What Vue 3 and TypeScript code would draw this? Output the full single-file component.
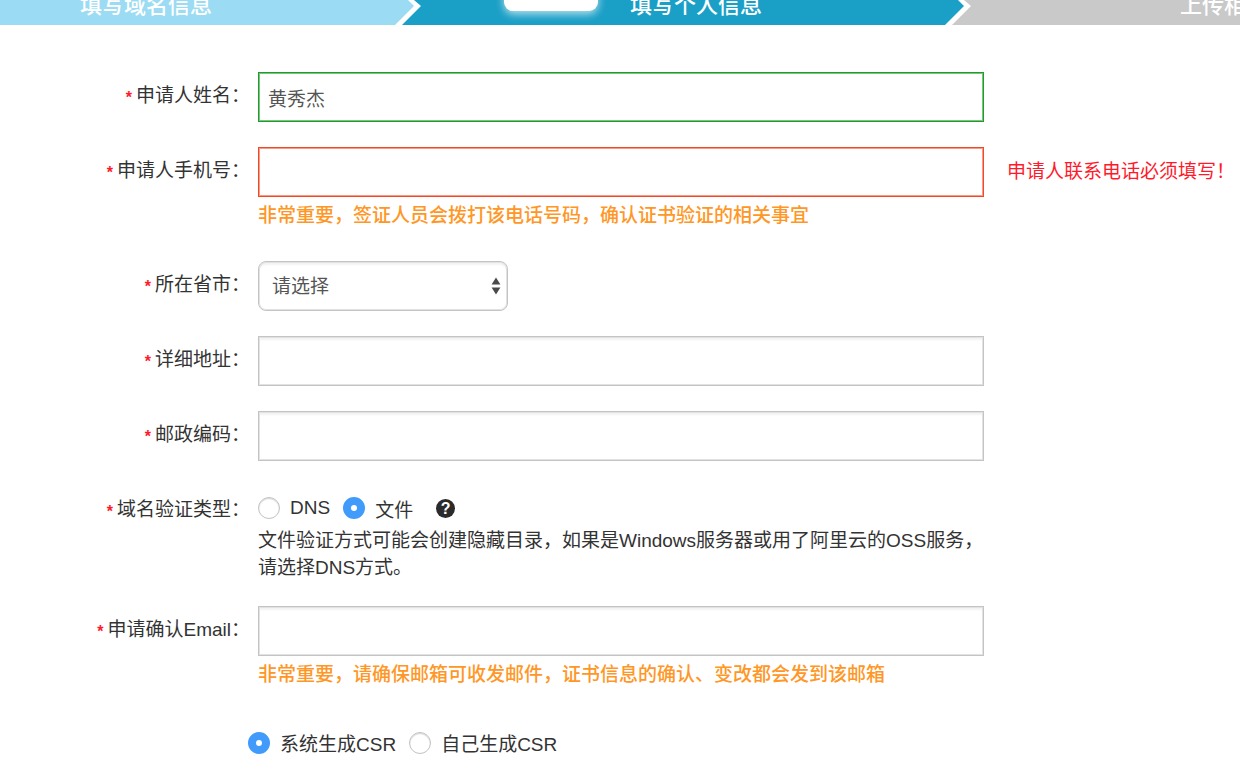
<script setup lang="ts">
import { ref } from 'vue'

const steps = ['填写域名信息', '填写个人信息', '上传相关信息']

const name = ref('黄秀杰')
const phone = ref('')
const province = ref('')
const address = ref('')
const postcode = ref('')
const email = ref('')
const verifyType = ref<'dns' | 'file'>('file')
const csrMode = ref<'system' | 'self'>('system')
</script>

<template>
  <div class="page">
    <ol class="steps">
      <li v-for="(step, i) in steps" :key="step" class="step" :class="'step-' + (i + 1)">
        <span class="step-text">{{ step }}</span>
        <span v-if="i === 1" class="badge"></span>
      </li>
    </ol>

    <form class="form" @submit.prevent>
      <div class="row">
        <label class="label" for="name"><span class="star">*</span>申请人姓名：</label>
        <div class="field">
          <input id="name" v-model="name" class="input valid" type="text" />
        </div>
      </div>

      <div class="row">
        <label class="label" for="phone"><span class="star">*</span>申请人手机号：</label>
        <div class="field">
          <input id="phone" v-model="phone" class="input invalid" type="tel" />
          <p class="hint">非常重要，签证人员会拨打该电话号码，确认证书验证的相关事宜</p>
        </div>
        <p class="error">申请人联系电话必须填写！</p>
      </div>

      <div class="row">
        <label class="label" for="province"><span class="star">*</span>所在省市：</label>
        <div class="field">
          <div class="select-wrap">
            <select id="province" v-model="province" class="select">
              <option value="">请选择</option>
            </select>
            <svg class="arrows" viewBox="0 0 10 18" width="10" height="18" aria-hidden="true">
              <path d="M5 0.5L9.4 7.5H0.6ZM5 17.5L9.4 10.5H0.6Z" fill="#4a4a4a" />
            </svg>
          </div>
        </div>
      </div>

      <div class="row">
        <label class="label" for="address"><span class="star">*</span>详细地址：</label>
        <div class="field">
          <input id="address" v-model="address" class="input" type="text" />
        </div>
      </div>

      <div class="row">
        <label class="label" for="postcode"><span class="star">*</span>邮政编码：</label>
        <div class="field">
          <input id="postcode" v-model="postcode" class="input" type="text" />
        </div>
      </div>

      <div class="row" role="radiogroup" aria-labelledby="verify-label">
        <span id="verify-label" class="label"><span class="star">*</span>域名验证类型：</span>
        <div class="field">
          <div class="radios">
            <label class="option"><input v-model="verifyType" class="radio" type="radio" name="verify" value="dns" />DNS</label>
            <label class="option"><input v-model="verifyType" class="radio" type="radio" name="verify" value="file" />文件</label>
            <button class="help" type="button">?</button>
          </div>
          <p class="note">文件验证方式可能会创建隐藏目录，如果是Windows服务器或用了阿里云的OSS服务，<br />请选择DNS方式。</p>
        </div>
      </div>

      <div class="row">
        <label class="label" for="email"><span class="star">*</span>申请确认Email：</label>
        <div class="field">
          <input id="email" v-model="email" class="input" type="email" />
          <p class="hint">非常重要，请确保邮箱可收发邮件，证书信息的确认、变改都会发到该邮箱</p>
        </div>
      </div>

      <div class="csr">
        <label class="option"><input v-model="csrMode" class="radio" type="radio" name="csr" value="system" />系统生成CSR</label>
        <label class="option"><input v-model="csrMode" class="radio" type="radio" name="csr" value="self" />自己生成CSR</label>
      </div>
    </form>
  </div>
</template>

<style>
body {
  margin: 0;
  background: #fff;
}
</style>

<style scoped>
.page {
  font-family: "Liberation Sans", "Noto Sans CJK SC", sans-serif;
  font-size: 19px;
  color: #333;
  overflow: hidden;
}
.page * {
  box-sizing: border-box;
}
p {
  margin: 0;
}
.steps {
  display: grid;
  grid-template-columns: minmax(0, 414fr) minmax(0, 550fr) minmax(0, 276fr);
  margin: 0;
  padding: 0;
  list-style: none;
}
.step {
  position: relative;
  height: 25px;
  min-width: 0;
  color: #fff;
  font-size: 22px;
  font-weight: 500;
  line-height: 12px;
  white-space: nowrap;
}
.step-1 {
  padding-left: 80px;
  background: #9bdbf3;
  clip-path: polygon(0 0, calc(100% - 6px) 0, 100% 6px, calc(100% - 19px) 100%, 0 100%);
}
.step-2 {
  margin-left: -12px;
  padding-left: 228px;
  background: #1a9fc6;
  clip-path: polygon(12px 0, calc(100% - 6px) 0, 100% 6px, calc(100% - 19px) 100%, 0 100%, 19px 6px);
}
.step-3 {
  margin-left: -12px;
  padding-left: 228px;
  background: #c9c9c9;
  clip-path: polygon(12px 0, 100% 0, 100% 100%, 0 100%, 19px 6px);
}
.badge {
  position: absolute;
  top: -20px;
  left: 102px;
  width: 94px;
  height: 31px;
  border-radius: 9px;
  background: #fff;
  box-shadow: 0 3px 8px rgba(255, 255, 255, 0.7);
}
.form {
  display: flex;
  flex-direction: column;
  gap: 25px;
  padding: 47px 0 7px;
}
.row {
  display: grid;
  grid-template-columns: 250px minmax(0, 726px) 1fr;
  column-gap: 8px;
  align-items: start;
}
.label {
  display: flex;
  justify-content: flex-end;
  gap: 4px;
  line-height: 47px;
  white-space: nowrap;
}
.star {
  padding-top: 2px;
  color: #ff1a2b;
  font-size: 16px;
  font-weight: bold;
}
.input,
.select {
  display: block;
  width: 100%;
  height: 50px;
  margin: 0;
  border: 1px solid #c4c4c4;
  border-radius: 0;
  background: #fff;
  box-shadow: inset 0 0 0 1px #e2e2e2, inset 0 3px 2px rgba(0, 0, 0, 0.05);
  color: #555;
  font: inherit;
  outline: none;
}
.input {
  padding: 0 9px;
}
.valid {
  border-color: #1f9c29;
  box-shadow: inset 0 0 0 1px #79c47f;
}
.invalid {
  border-color: #f0492a;
  box-shadow: inset 0 0 0 1px #f79a86;
}
.select-wrap {
  position: relative;
  width: 250px;
}
.select {
  appearance: none;
  padding: 0 30px 0 13px;
  border-radius: 8px;
}
.arrows {
  position: absolute;
  top: 16px;
  right: 7px;
  pointer-events: none;
}
.hint {
  margin: 4px 0 7px;
  padding-top: 2px;
  color: #ff9727;
  font-weight: 500;
  line-height: 26px;
}
.error {
  padding-left: 15px;
  color: #ff1a2b;
  line-height: 50px;
  white-space: nowrap;
}
.radios {
  display: flex;
  align-items: center;
  gap: 13px;
  height: 41px;
  padding-top: 3px;
}
.option {
  display: flex;
  align-items: center;
  gap: 10px;
}
.radio {
  appearance: none;
  flex: none;
  width: 22px;
  height: 22px;
  margin: 0;
  border: 1px solid #c2c2c2;
  border-radius: 50%;
  background: #fff;
  box-shadow: inset 0 1px 1px #d4d4d4;
}
.radio:checked {
  border: 8px solid #409bfb;
  box-shadow: none;
}
.help {
  width: 19px;
  height: 19px;
  margin-left: 10px;
  padding: 0;
  border: 0;
  border-radius: 50%;
  background: #2b2b2b;
  color: #fff;
  font: bold 16px/19px "Liberation Sans", sans-serif;
}
.note {
  line-height: 27px;
  white-space: nowrap;
}
.csr {
  display: flex;
  align-items: center;
  gap: 13px;
  height: 45px;
  margin-left: 248px;
}
</style>
